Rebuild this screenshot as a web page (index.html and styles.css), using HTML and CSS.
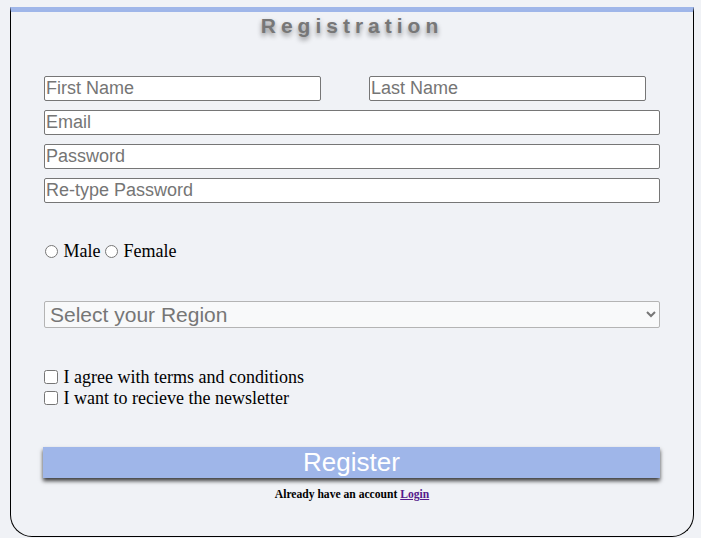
FILE: index.html
```html
<!DOCTYPE html>
<html lang="en">
<head>
<meta charset="utf-8">
<title>Registration</title>
<link rel="stylesheet" href="styles.css">
</head>
<body>
<div class="card">
  <h1 class="title">Registration</h1>
  <form class="form">
    <div class="name-row">
      <input class="field half" type="text" placeholder="First Name">
      <input class="field half" type="text" placeholder="Last Name">
    </div>
    <input class="field" type="email" placeholder="Email">
    <input class="field" type="password" placeholder="Password">
    <input class="field" type="password" placeholder="Re-type Password">
    <div class="gender">
      <label class="opt"><input class="radio" type="radio" name="g"> Male</label>
      <label class="opt"><input class="radio" type="radio" name="g"> Female</label>
    </div>
    <select class="region">
      <option>Select your Region</option>
    </select>
    <div class="checks">
      <label class="check"><input class="box" type="checkbox"> I agree with terms and conditions</label>
      <label class="check"><input class="box" type="checkbox"> I want to recieve the newsletter</label>
    </div>
    <button class="submit" type="button">Register</button>
    <p class="already">Already have an account <a class="login" href="#">Login</a></p>
  </form>
</div>
</body>
</html>
```
FILE: styles.css
```css
html, body {
  margin: 0;
  padding: 0;
  background: #f0f2f6;
}

body {
  font-family: "Liberation Serif", "Times New Roman", serif;
  padding: 7px 7px 0 10px;
}

.card {
  box-sizing: border-box;
  width: 684px;
  height: 530px;
  border-top: 5px solid #9fb6e9;
  border-left: 1px solid #000;
  border-right: 1px solid #000;
  border-bottom: 1px solid #000;
  border-radius: 0 0 22px 22px;
  padding: 0 33px;
}

.title {
  margin: 2px 0 0;
  text-align: center;
  font-family: "Liberation Sans", Arial, sans-serif;
  font-size: 21px;
  line-height: 24px;
  font-weight: bold;
  letter-spacing: 5px;
  color: #777;
  text-shadow: 0 3px 5px rgba(0, 0, 0, 0.45);
}

.form {
  display: flex;
  flex-direction: column;
  margin-top: 38px;
}

.name-row {
  display: flex;
  gap: 48px;
}

.field {
  box-sizing: border-box;
  height: 25px;
  margin: 0 0 9px;
  padding: 1px 1px;
  border: 1px solid #767676;
  border-radius: 2px;
  background: #fff;
  font-family: "Liberation Sans", Arial, sans-serif;
  font-size: 18px;
  color: #000;
}

.name-row .field {
  width: 277px;
}

.field::placeholder {
  color: #757575;
}

.gender {
  margin-top: 29px;
  font-size: 18px;
}

.radio {
  margin: 0 1px 0 1px;
  width: 13px;
  height: 13px;
  vertical-align: -1px;
}

.opt + .opt .radio {
  margin-left: 0;
}

.region {
  box-sizing: border-box;
  margin-top: 39px;
  height: 27px;
  padding: 0 1px;
  border: 1px solid #b4b4b4;
  border-radius: 2px;
  background: #f8f9fa;
  font-family: "Liberation Sans", Arial, sans-serif;
  font-size: 21px;
  color: #767676;
}

.checks {
  margin-top: 39px;
  display: flex;
  flex-direction: column;
  font-size: 18px;
}

.box {
  margin: 0 1px 0 0;
  width: 14px;
  height: 14px;
  vertical-align: -1px;
}

.submit {
  box-sizing: border-box;
  margin: 38px 0 0 -1px;
  width: 617px;
  height: 31px;
  padding: 0;
  border: none;
  background: #9fb6e9;
  color: #fff;
  font-family: "Liberation Sans", Arial, sans-serif;
  font-size: 26px;
  line-height: 31px;
  box-shadow: 0 3px 4px rgba(0, 0, 0, 0.75);
}

.already {
  margin: 10px 0 0;
  text-align: center;
  font-size: 11.6px;
  font-weight: bold;
}

.login {
  color: #551a8b;
}
```
